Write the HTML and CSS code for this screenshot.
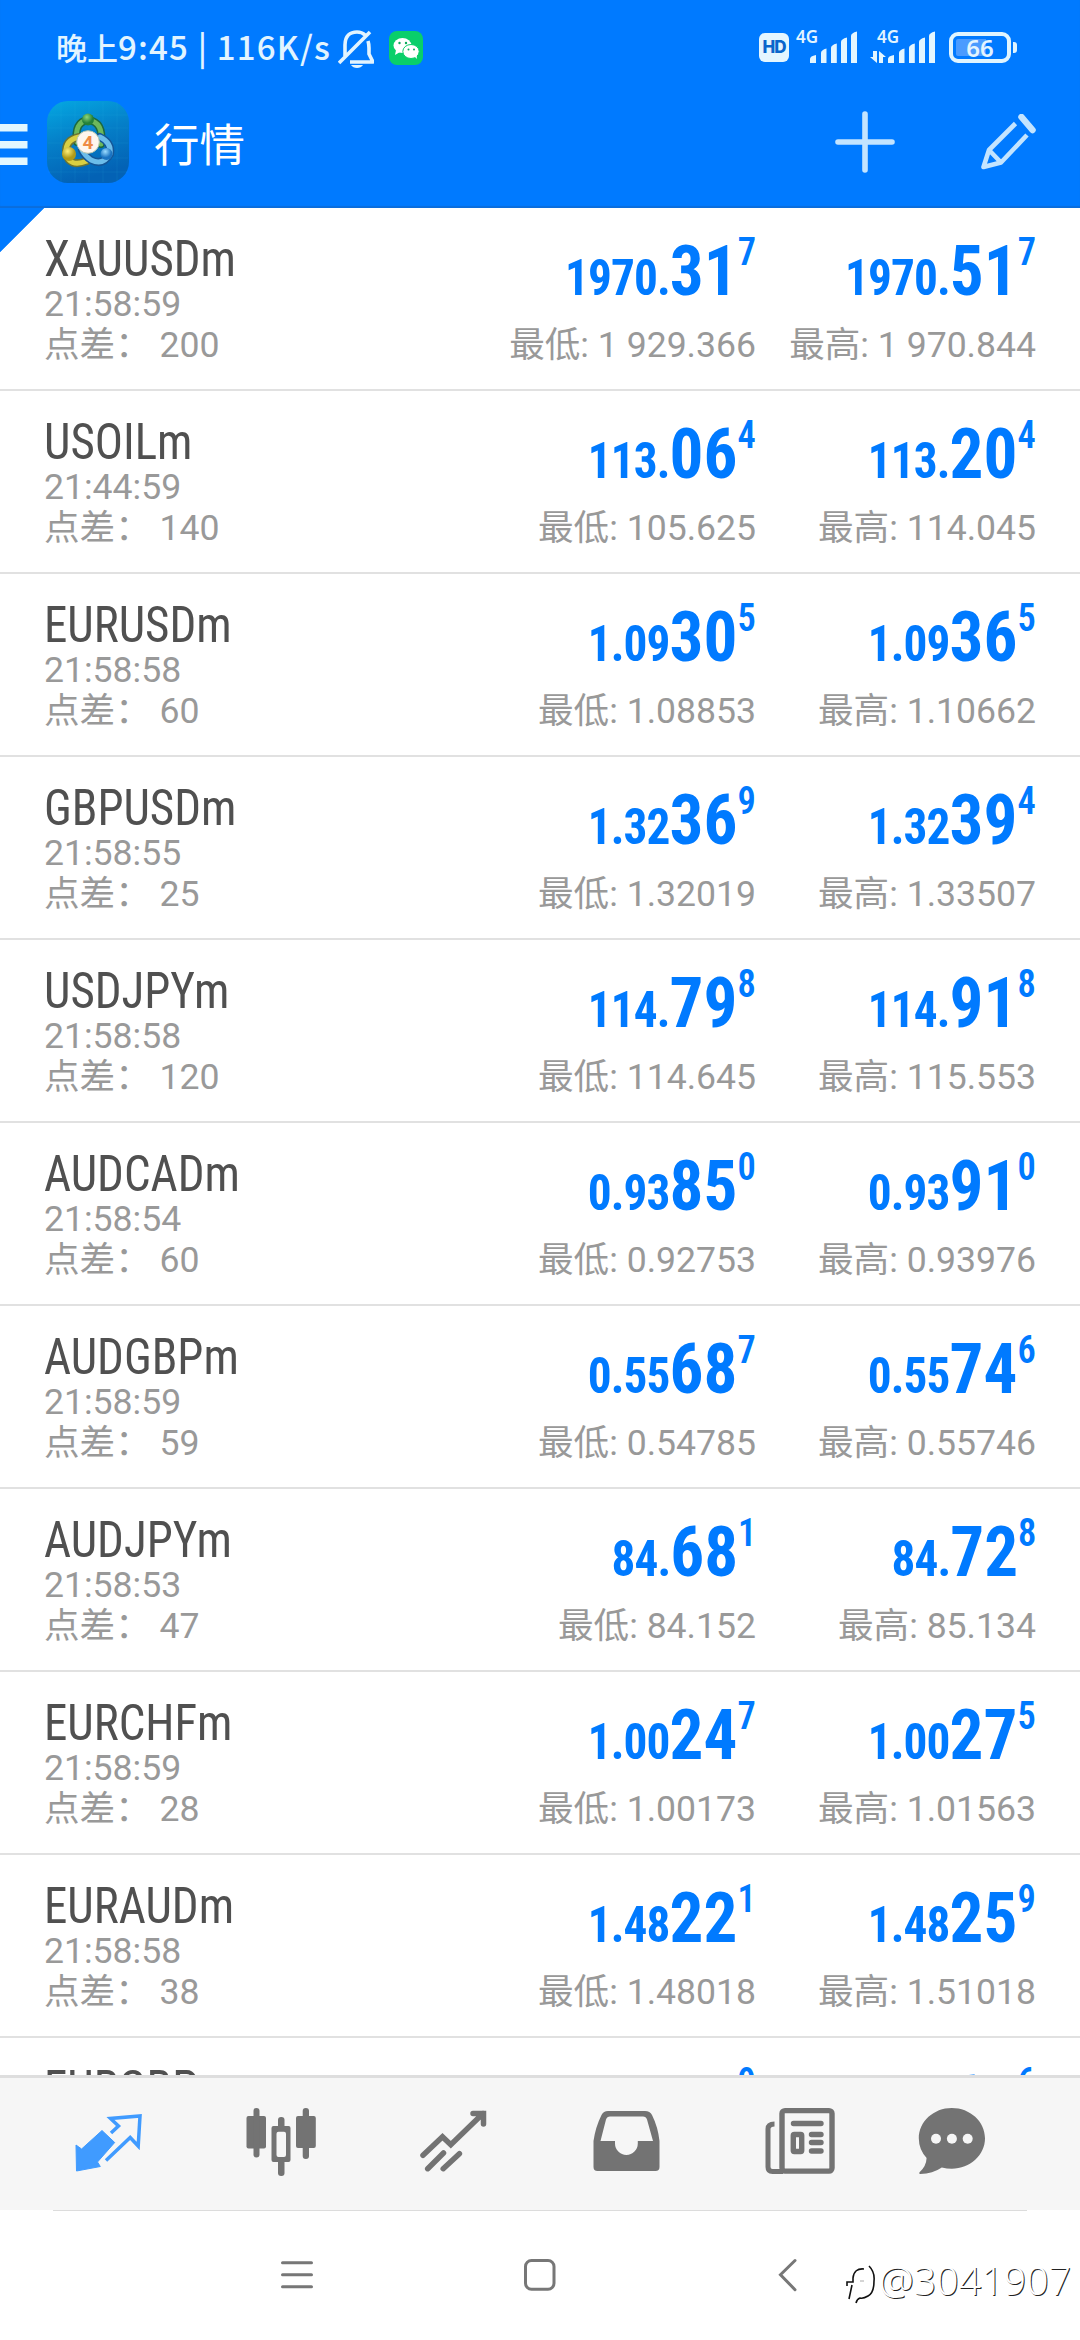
FILE: index.html
```html
<!DOCTYPE html>
<html lang="zh-CN">
<head>
<meta charset="utf-8">
<title>行情</title>
<link rel="stylesheet" href="styles.css">
</head>
<body>
<div class="screen">
  <header class="top">
    <div class="status">
      <span class="clock">晚上<span class="lat">9:45 | 116K/s</span></span>
      <svg class="bell" width="36" height="40" viewBox="338 28 36 40" fill="none" stroke="#e2f4ff" stroke-width="3.6" stroke-linejoin="round"><path d="M345 55V44C345 35 350 31 357 31q5 0 8 3M368 40q1 3 1 7v6l4 8H350M339 62L370 31"/><path d="M351 64h12q-2 3-6 3t-6-3z" fill="#e2f4ff" stroke="none"/></svg>
      <svg class="wechat" width="34" height="34" viewBox="0 0 34 34"><rect width="34" height="34" rx="8" fill="#09cf6a"/><g fill="#fff"><ellipse cx="13.5" cy="14.5" rx="9" ry="7.6"/><path d="M7 19l-1 5 5-3z"/></g><ellipse cx="22" cy="20.500" rx="8.200" ry="7" fill="#fff" stroke="#09cf6a"/><path d="M25 25l3 3-.5-5z" fill="#fff"/><g fill="#09a95b"><circle cx="10.500" cy="12" r="1.200"/><circle cx="17" cy="12" r="1.200"/><circle cx="19.500" cy="18.500" r="1"/><circle cx="25" cy="18.500" r="1"/></g></svg>
      <span class="grow"></span>
      <span class="hd">HD</span>
      <span class="net">4G</span>
      <svg class="bars" width="50" height="34" viewBox="0 0 50 34" fill="#e4f6ff"><path id="bars" d="M1 33v-4q0-3 6-4v8zM12 33V23q0-3 5.500-4.500V33zM22 33V18q0-3 5.800-4.500V33zM32 33V12q0-3 6-4.500V33zM42 33V6q0-3 6-4.500V33z"/></svg>
      <span class="net second">4G</span>
      <svg class="arrows" width="18" height="14" viewBox="0 0 18 14" fill="#e4f6ff"><path d="M4 0h4v12l-7-6h3zM10 12V0l7 6h-3v6z"/></svg>
      <svg class="bars b2" width="50" height="34" viewBox="0 0 50 34" fill="#e4f6ff"><use href="#bars"/></svg>
      <span class="battery"><span>66</span></span><i class="nub"></i>
    </div>
    <div class="bar">
      <svg class="menu" width="28" height="42" viewBox="0 0 28 42" fill="#e2f7ff"><path d="M0 0h27.500v7.500H0zM0 17h27.500v7.500H0zM0 33.500h27.500V41H0z"/></svg>
      <svg class="logo" width="82" height="82" viewBox="0 0 82 82">
        <defs>
          <linearGradient id="bg" x2=".3" y2="1"><stop stop-color="#04a8e2"/><stop offset=".5" stop-color="#057fc8"/><stop offset="1" stop-color="#0362b5"/></linearGradient>
          <radialGradient id="gr" cx=".4" cy=".3"><stop stop-color="#8fd67a"/><stop offset="1" stop-color="#23813a"/></radialGradient>
          <radialGradient id="ye" cx=".4" cy=".3"><stop stop-color="#fff07a"/><stop offset="1" stop-color="#b09a18"/></radialGradient>
          <radialGradient id="bl" cx=".4" cy=".3"><stop stop-color="#9bdcff"/><stop offset="1" stop-color="#1b74c2"/></radialGradient>
        </defs>
        <rect width="82" height="82" rx="21" fill="url(#bg)"/>
        <path d="M14 1v80M28 1v80M42 1v80M56 1v80M70 1v80M1 14h80M1 27h80M1 42h80M1 57h80M1 71h80" stroke="#46c6f2" stroke-opacity=".1"/>
        <g fill="none" stroke-linecap="round" stroke-linejoin="round">
          <path d="M30 41q-3-20 11-22 16 2 13 24" stroke="#1c6940" stroke-width="8"/>
          <path d="M30 41q-3-20 11-22 16 2 13 24" stroke="#6cb85c" stroke-width="5"/>
          <path d="M40 60Q22 67 19 52q-1-13 13-16" stroke="#6b7433" stroke-width="8"/>
          <path d="M40 60Q22 67 19 52q-1-13 13-16" stroke="#d9cf42" stroke-width="5"/>
          <path d="M53 36q12 6 10 17-7 12-19 6-6-4-9-10" stroke="#155697" stroke-width="8"/>
          <path d="M53 36q12 6 10 17-7 12-19 6-6-4-9-10" stroke="#6cbdea" stroke-width="5"/>
        </g>
        <circle cx="41" cy="18.500" r="6" fill="url(#gr)"/><circle cx="22" cy="53" r="7" fill="url(#ye)"/><circle cx="59.500" cy="53" r="6" fill="url(#bl)"/>
        <circle cx="41" cy="41" r="11.300" fill="#fff6ee" stroke="#b5c6b1"/>
        <text x="41" y="48" text-anchor="middle" class="four">4</text>
      </svg>
      <h1>行情</h1>
      <span class="grow"></span>
      <svg class="plus" width="60" height="62" viewBox="0 0 60 62" stroke="#c3e4ff" stroke-width="5.600" stroke-linecap="round"><path d="M30 3v56M3 31h54"/></svg>
      <svg class="pencil" width="56" height="56" viewBox="981 114 56 56" fill="none" stroke="#c3e4ff" stroke-width="4.600" stroke-linejoin="round"><path d="M1015.500 123.500L989 150l-5.500 17 17.500-4.500 26-27.500M989 150l12 12.500"/><path d="M1021.500 117l11 13" stroke-width="6.500" stroke-linecap="round"/></svg>
    </div>
  </header>
  <main class="quotes">
    <div class="row"><div class="sym"><b>XAUUSDm</b><span>21:58:59</span><span>点差： 200</span></div><div class="q"><p>1970.<em>31</em><sup>7</sup></p><span>最低: 1 929.366</span></div><div class="q"><p>1970.<em>51</em><sup>7</sup></p><span>最高: 1 970.844</span></div></div>
    <div class="row"><div class="sym"><b>USOILm</b><span>21:44:59</span><span>点差： 140</span></div><div class="q"><p>113.<em>06</em><sup>4</sup></p><span>最低: 105.625</span></div><div class="q"><p>113.<em>20</em><sup>4</sup></p><span>最高: 114.045</span></div></div>
    <div class="row"><div class="sym"><b>EURUSDm</b><span>21:58:58</span><span>点差： 60</span></div><div class="q"><p>1.09<em>30</em><sup>5</sup></p><span>最低: 1.08853</span></div><div class="q"><p>1.09<em>36</em><sup>5</sup></p><span>最高: 1.10662</span></div></div>
    <div class="row"><div class="sym"><b>GBPUSDm</b><span>21:58:55</span><span>点差： 25</span></div><div class="q"><p>1.32<em>36</em><sup>9</sup></p><span>最低: 1.32019</span></div><div class="q"><p>1.32<em>39</em><sup>4</sup></p><span>最高: 1.33507</span></div></div>
    <div class="row"><div class="sym"><b>USDJPYm</b><span>21:58:58</span><span>点差： 120</span></div><div class="q"><p>114.<em>79</em><sup>8</sup></p><span>最低: 114.645</span></div><div class="q"><p>114.<em>91</em><sup>8</sup></p><span>最高: 115.553</span></div></div>
    <div class="row"><div class="sym"><b>AUDCADm</b><span>21:58:54</span><span>点差： 60</span></div><div class="q"><p>0.93<em>85</em><sup>0</sup></p><span>最低: 0.92753</span></div><div class="q"><p>0.93<em>91</em><sup>0</sup></p><span>最高: 0.93976</span></div></div>
    <div class="row"><div class="sym"><b>AUDGBPm</b><span>21:58:59</span><span>点差： 59</span></div><div class="q"><p>0.55<em>68</em><sup>7</sup></p><span>最低: 0.54785</span></div><div class="q"><p>0.55<em>74</em><sup>6</sup></p><span>最高: 0.55746</span></div></div>
    <div class="row"><div class="sym"><b>AUDJPYm</b><span>21:58:53</span><span>点差： 47</span></div><div class="q"><p>84.<em>68</em><sup>1</sup></p><span>最低: 84.152</span></div><div class="q"><p>84.<em>72</em><sup>8</sup></p><span>最高: 85.134</span></div></div>
    <div class="row"><div class="sym"><b>EURCHFm</b><span>21:58:59</span><span>点差： 28</span></div><div class="q"><p>1.00<em>24</em><sup>7</sup></p><span>最低: 1.00173</span></div><div class="q"><p>1.00<em>27</em><sup>5</sup></p><span>最高: 1.01563</span></div></div>
    <div class="row"><div class="sym"><b>EURAUDm</b><span>21:58:58</span><span>点差： 38</span></div><div class="q"><p>1.48<em>22</em><sup>1</sup></p><span>最低: 1.48018</span></div><div class="q"><p>1.48<em>25</em><sup>9</sup></p><span>最高: 1.51018</span></div></div>
    <div class="row"><div class="sym"><b>EURGBPm</b></div><div class="q"><p>0.82<em>57</em><sup>9</sup></p></div><div class="q"><p>0.82<em>61</em><sup>6</sup></p></div></div>
  </main>
  <nav class="tabs">
    <svg viewBox="68 2100 80 80"><path d="M76 2145l5.600 4L102 2130.500l12.700 12L97.500 2162l2.800 4.500-23.800 4.500z" fill="#409bff" stroke="#409bff" stroke-linejoin="round"/><path d="M111 2133l7.500-7-8-7.500 29.500-2.500-1.800 30-8-8.500-24.200 23" fill="none" stroke="#409bff" stroke-width="3.500"/></svg>
    <svg viewBox="241 2100 80 80"><g fill="#737373"><rect x="246.500" y="2116" width="19.500" height="32.500" rx="2"/><rect x="253.500" y="2108" width="6" height="49.500" rx="3"/><rect x="278" y="2117" width="6.500" height="14" rx="3"/><rect x="278" y="2158" width="6.500" height="18" rx="3"/><path fill-rule="evenodd" d="M273.500 2126h15q2 0 2 2v32q0 2-2 2h-15q-2 0-2-2v-32q0-2 2-2zM278.500 2131.700q-2 0-2 2V2155q0 2 2 2h5.500q2 0 2-2v-21.300q0-2-2-2z"/><rect x="296" y="2116" width="19.800" height="32" rx="2"/><rect x="302.700" y="2108" width="6.300" height="51" rx="3"/></g></svg>
    <svg viewBox="415 2100 80 80"><path d="M424 2155.300l19.500-18.600 8.300 8 32.200-31.200M474 2113.500h10.500V2124M428.700 2168.700l15.800-15.700M444.200 2168.700l16.200-15" fill="none" stroke="#737373" stroke-width="5.500" stroke-linecap="round" stroke-linejoin="miter"/></svg>
    <svg viewBox="588 2100 80 80"><path fill="#737373" fill-rule="evenodd" d="M609 2111h37q5 0 7 4 6 12 7.500 26v26q0 4-4 4h-58q-4 0-4-4v-26q2-14 8-26 2-4 6.500-4zM611 2116.500q-3 0-4 3l-5.500 21.500H616v2.500a11.400 11.400 0 0 0 22.800 0V2141H654l-6-21.500q-1-3-4-3z"/></svg>
    <svg viewBox="761 2100 80 80"><g fill="none" stroke="#737373"><rect x="783" y="2110.600" width="50" height="60.500" rx="3" stroke-width="5.400"/><path d="M775.500 2124q-6.500 0-6.500 5v38q0 4.500 4.500 4.500H784" stroke-width="5"/><rect x="794.300" y="2134.500" width="8.400" height="17" rx="1" stroke-width="5.400"/><path d="M794.500 2123.500h27.500M812.500 2134.500H822M812.500 2142.500H822M812.500 2151H822" stroke-width="5.400" stroke-linecap="round"/></g></svg>
    <svg viewBox="913 2100 80 80"><path fill="#737373" d="M952.800 2108c18.300 0 33.200 13.500 33.200 30.300s-14.900 30.400-33.200 30.400q-5 0-10-1.200-9 6.200-21.500 6.500-2-.3-.5-2 6.500-6 6.800-14-7.800-8.500-7.800-19.700c0-16.800 14.900-30.300 33-30.300z"/><g fill="#f6f6f6"><circle cx="937" cy="2138.700" r="5"/><circle cx="952.900" cy="2138.700" r="5"/><circle cx="968.700" cy="2138.700" r="5"/></g></svg>
  </nav>
  <footer class="sys">
    <svg viewBox="277 2255 40 40"><path d="M282.500 2262.700h29M282.500 2274.700h29M282.500 2286.700h29"/></svg>
    <svg viewBox="520 2255 40 40"><rect x="525.500" y="2260.500" width="28.500" height="28.700" rx="6"/></svg>
    <svg viewBox="768 2255 40 40"><path d="M795 2260.500l-14.500 14.200 14.500 15"/></svg>
    <div class="mark"><svg width="34" height="40" viewBox="0 0 34 40" fill="none" stroke="#111" stroke-width="1.600"><path d="M19 4Q9 3 8 13v4H2v4M7 20L4 34M24 1q6 6 5 15 0 12-6 15-5 3-8 2-3 1-4 5"/><path d="M15 16h4" stroke="#aaa" stroke-width="1"/></svg><span>@3041907</span></div>
  </footer>
</div>
</body>
</html>
```

FILE: styles.css
```css
* { box-sizing: border-box; }
body, p, h1 { margin: 0; }
body { background: #fff; font-family: Roboto, "Noto Sans CJK SC", sans-serif; }
svg { display: block; flex: none; }
.screen { width: 1080px; height: 2340px; overflow: hidden; display: flex; flex-direction: column; }
.grow { flex: 1; }

.top { height: 208px; flex: none; background: #007aff; box-shadow: inset 0 -2px 1px #0a6ddc; }
.status { height: 88px; display: flex; align-items: flex-start; padding: 28px 63px 0 56px; color: #e2f4ff; }
.clock { font: 500 31px/36px "Noto Sans CJK SC", sans-serif; width: 282px; white-space: nowrap; }
.lat { font-size: 33px; letter-spacing: 1.200px; }
.bell { margin-top: 1px; }
.wechat { margin: 3px 0 0 15px; }
.hd { width: 30px; height: 29px; margin: 5px 7px 0 0; border-radius: 6px; background: #e4f6ff; color: #0a66cc; font: 800 17px/29px Inter, sans-serif; text-align: center; letter-spacing: -1px; }
.net { font: 600 17px/18px "Noto Sans", sans-serif; width: 13px; white-space: nowrap; }
.net.second { margin-left: 18px; width: 0; }
.bars { margin-top: 2px; }
.arrows { margin: 23px 0 0 -8px; }
.battery { width: 62px; height: 31px; margin: 4px 2px 0 12px; border: 4px solid #e0f5ff; border-radius: 9px; padding: 3px; }
.battery span { display: block; height: 17px; border-radius: 2px; background: linear-gradient(90deg, #4a9bff 62%, transparent 62%); font: 600 24px/17px "Noto Sans", sans-serif; text-align: center; }
.nub { width: 4px; height: 11px; margin-top: 14px; border-radius: 0 3px 3px 0; background: #e0f5ff; }

.bar { height: 120px; display: flex; align-items: flex-start; padding-right: 43px; }
.menu { margin-top: 35.500px; }
.logo { margin: 13px 0 0 19px; }
.four { font: 700 19px Roboto, sans-serif; fill: #ee8b46; }
h1 { margin: 24px 0 0 25px; font: 400 45.500px/60px "Noto Sans CJK SC", sans-serif; color: #fff; }
.plus { margin: 23px 86px 0 0; }
.pencil { margin-top: 26px; }

.quotes { height: 1867px; flex: none; overflow: hidden; background: linear-gradient(135deg, #007aff 31px, transparent 31.500px) no-repeat 0 0 / 60px 60px; }
.row { height: 183px; display: flex; padding: 0 44px; border-bottom: 2px solid #e1e1e1; color: #999; font-size: 35.600px; line-height: 41px; white-space: nowrap; }
.sym { flex: 1; padding-top: 25px; }
.sym b { display: block; height: 51px; font-weight: 450; font-size: 50px; line-height: 52px; color: #505050; font-stretch: 75%; transform: scaleX(.94); transform-origin: 0 0; }
.sym span, .q span { display: block; }
.q { width: 280px; text-align: right; display: flex; flex-direction: column; align-items: flex-end; }
.q p { height: 117px; padding-top: 21px; font-weight: 700; font-size: 50px; line-height: 84px; letter-spacing: -.95px; color: #007aff; font-stretch: 75%; transform: scaleX(.945); transform-origin: 100% 0; }
.q em { font-style: normal; font-size: 71px; line-height: 84px; letter-spacing: 0; }
.q sup { font-size: 38.500px; font-weight: 600; line-height: 0; vertical-align: 30px; letter-spacing: 0; }

.tabs { height: 135px; flex: none; background: #f6f6f6; border-top: 3px solid #dedede; display: grid; grid-template-columns: repeat(4, 173px) 152px 80px; padding: 22px 0 0 68px; }
.tabs svg { width: 80px; height: 80px; }
.sys { flex: 1; display: grid; grid-template-columns: 277px 243px 248px 77px 1fr; padding-top: 45px; background: linear-gradient(#dcdcdc, #dcdcdc) no-repeat 53px 0 / 974px 1px; }
.sys > svg { width: 40px; height: 40px; fill: none; stroke: #777; stroke-width: 3; stroke-linecap: round; }
.sys > svg:first-child { grid-column: 2; }
.mark { display: flex; align-items: flex-start; padding-top: 10px; }
.mark span { margin-top: -6px; font: 300 39px/42px "Noto Sans", sans-serif; letter-spacing: .2px; color: #fff; text-shadow: 1px 1px 0 #222; }
```
